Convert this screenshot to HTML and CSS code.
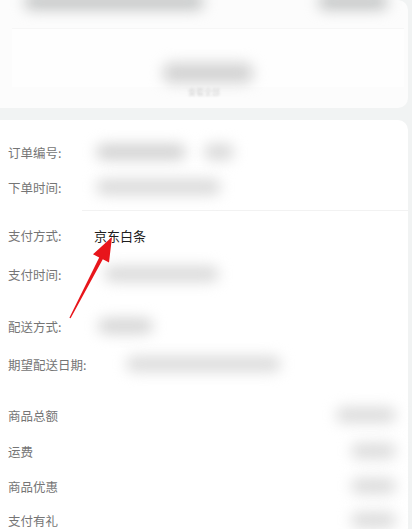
FILE: index.html
```html
<!DOCTYPE html>
<html lang="zh-CN">
<head>
  <meta charset="UTF-8">
  <meta name="viewport" content="width=device-width, initial-scale=1.0">
  <title>订单详情</title>
  <link rel="stylesheet" href="styles.css">
</head>
<body>
    <div class="page">
        <div class="card top-card">
            <div class="top-row">
                <span class="blur blur-a"></span>
                <span class="blur blur-b"></span>
            </div>
            <div class="top-inner">
                <span class="blur blur-c"></span>
            </div>
            <div class="more">查看全部</div>
        </div>

        <div class="card info-card">
            <div class="section first-section">
                <div class="row">
                    <span class="label">订单编号:</span>
                    <span class="blur v-order"></span>
                    <span class="blur v-order-2"></span>
                </div>
                <div class="row row-gap-15">
                    <span class="label">下单时间:</span>
                    <span class="blur v-time"></span>
                </div>
            </div>
            <div class="divider"></div>
            <div class="section">
                <div class="row row-gap-14">
                    <span class="label">支付方式:</span>
                    <span class="value">京东白条</span>
                </div>
                <div class="row row-gap-19">
                    <span class="label">支付时间:</span>
                    <span class="blur v-paytime"></span>
                </div>
                <div class="row row-gap-32">
                    <span class="label">配送方式:</span>
                    <span class="blur v-ship"></span>
                </div>
                <div class="row row-gap-18">
                    <span class="label">期望配送日期:</span>
                    <span class="blur v-date"></span>
                </div>
            </div>
            <div class="section amounts">
                <div class="row row-gap-31 amount-row">
                    <span class="label">商品总额</span>
                    <span class="blur v-money wide"></span>
                </div>
                <div class="row row-gap-16 amount-row">
                    <span class="label">运费</span>
                    <span class="blur v-money"></span>
                </div>
                <div class="row row-gap-15 amount-row">
                    <span class="label">商品优惠</span>
                    <span class="blur v-money"></span>
                </div>
                <div class="row row-gap-14 amount-row">
                    <span class="label">支付有礼</span>
                    <span class="blur v-money"></span>
                </div>
            </div>
        </div>

        <svg class="arrow" width="412" height="529" viewBox="0 0 412 529">
            <polygon points="112,237 109,262.5 102.8,259.3 70.6,318.3 69.4,317.7 99.2,257.5 93,254.3" fill="#e8151b"/>
        </svg>
    </div>
</body>
</html>
```

FILE: styles.css
```css
body {
    margin: 0;
    background-color: #f1f3f3;
    font-family: "Noto Sans CJK SC", "Noto Sans", sans-serif;
}
.page {
    position: relative;
    width: 412px;
    height: 529px;
    overflow: hidden;
}
.card {
    background-color: #fff;
    margin-right: 4px;
    border-radius: 0 10px 10px 0;
}
.top-card {
    height: 108px;
    background-color: #fcfcfc;
    display: flex;
    flex-direction: column;
}
.top-row {
    display: flex;
    justify-content: space-between;
    padding: 0 20px 0 24px;
    height: 14px;
}
.top-inner {
    display: flex;
    justify-content: center;
    margin: 14px 4px 0 12px;
    height: 58px;
    background-color: #fefefe;
    border-top: 1px solid #f6f6f6;
}
.more {
    text-align: center;
    font-size: 8px;
    color: #d4d4d4;
    filter: blur(0.8px);
    line-height: 10px;
}
.blur {
    display: block;
    height: 16px;
    border-radius: 8px;
    background-color: #c4c6c6;
    filter: blur(7px);
}
.blur-a {
    width: 180px;
    margin-top: -6px;
}
.blur-b {
    width: 70px;
    margin-top: -6px;
}
.blur-c {
    width: 90px;
    height: 20px;
    margin-top: 34px;
    background-color: #d2d2d2;
}
.info-card {
    margin-top: 12px;
    height: 420px;
}
.first-section {
    padding-top: 22px;
}
.row {
    display: flex;
    align-items: center;
    height: 20px;
    padding-left: 8px;
}
.row-gap-14 { margin-top: 14px; }
.row-gap-15 { margin-top: 15px; }
.row-gap-16 { margin-top: 16px; }
.row-gap-18 { margin-top: 18px; }
.row-gap-19 { margin-top: 19px; }
.row-gap-31 { margin-top: 31px; }
.row-gap-32 { margin-top: 32px; }
.label {
    font-size: 12.5px;
    color: #757575;
    width: 86px;
    flex-shrink: 0;
}
.value {
    font-size: 13px;
    color: #1e1e1e;
}
.v-order {
    width: 90px;
    margin-left: 2px;
    background-color: #d2d2d2;
}
.v-order-2 {
    width: 30px;
    margin-left: 18px;
    background-color: #d8d8d8;
}
.v-time {
    width: 125px;
    margin-left: 2px;
    background-color: #dadada;
}
.v-paytime {
    width: 115px;
    margin-left: 10px;
    background-color: #dadada;
}
.v-ship {
    width: 55px;
    margin-left: 4px;
    background-color: #d6d6d6;
}
.v-date {
    width: 155px;
    margin-left: 32px;
    background-color: #dcdcdc;
}
.divider {
    height: 1px;
    margin-left: 82px;
    background-color: #f2f2f2;
    margin-top: 13px;
}
.amount-row {
    justify-content: space-between;
    padding-right: 12px;
}
.v-money {
    width: 45px;
    background-color: #dcdcdc;
}
.v-money.wide {
    width: 60px;
}
.arrow {
    position: absolute;
    left: 0;
    top: 0;
    pointer-events: none;
}
```
